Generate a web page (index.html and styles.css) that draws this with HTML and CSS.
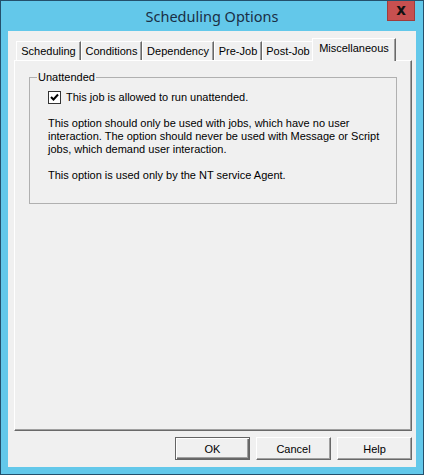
FILE: index.html
```html
<!DOCTYPE html>
<html>
<head>
  <title>Scheduling Options</title>
  <link rel="stylesheet" href="styles.css">
</head>
<body>
  <div class="window">
    <div class="titlebar">
      <span></span>
      <span class="title">Scheduling Options</span>
      <button class="close-button">x</button>
    </div>
    <div class="client">
      <div class="tabs">
        <div class="tab tab-scheduling">Scheduling</div>
        <div class="tab tab-conditions">Conditions</div>
        <div class="tab tab-dependency">Dependency</div>
        <div class="tab tab-prejob">Pre-Job</div>
        <div class="tab tab-postjob">Post-Job</div>
        <div class="tab tab-misc active">Miscellaneous</div>
      </div>
      <div class="panel">
        <fieldset class="group">
          <legend>Unattended</legend>
          <label class="check-row">
            <span class="checkbox">
              <svg width="9" height="9" viewBox="0 0 9 9"><path d="M1 4 L3.5 6.5 L8 1.5" fill="none" stroke="#000" stroke-width="2"/></svg>
            </span>
            This job is allowed to run unattended.
          </label>
          <p>This option should only be used with jobs, which have no user interaction. The option should never be used with Message or Script jobs, which demand user interaction.</p>
          <p>This option is used only by the NT service Agent.</p>
        </fieldset>
      </div>
      <div class="buttons">
        <button class="btn default">OK</button>
        <button class="btn">Cancel</button>
        <button class="btn">Help</button>
      </div>
    </div>
  </div>
</body>
</html>
```

FILE: styles.css
```css
body {
  margin: 0;
  font-family: "Liberation Sans", Arial, sans-serif;
  font-size: 11px;
  color: #000;
}
.window {
  width: 424px;
  height: 475px;
  box-sizing: border-box;
  border: 1px solid #24506c;
  background-color: #63c8ea;
  padding: 0 7px 7px 7px;
  display: flex;
  flex-direction: column;
}
.titlebar {
  height: 30px;
  display: grid;
  grid-template-columns: 1fr auto 1fr;
  align-items: start;
}
.title {
  font-family: "Noto Sans", "Open Sans", sans-serif;
  font-size: 14.5px;
  line-height: 30px;
  color: #1a2f45;
}
.close-button {
  justify-self: end;
  width: 28px;
  height: 20px;
  margin-right: 1px;
  padding: 0;
  border: 1px solid #a03c3c;
  border-top: none;
  background-color: #c75050;
  color: #111;
  font-family: "DejaVu Sans", sans-serif;
  font-weight: bold;
  font-size: 15px;
  line-height: 17px;
}
.client {
  flex: 1;
  background-color: #f0f0f0;
  padding: 7px 4px 7px 6px;
  display: flex;
  flex-direction: column;
}
.tabs {
  height: 22px;
  display: flex;
  align-items: flex-end;
  padding-left: 2px;
}
.tab {
  height: 19px;
  box-sizing: border-box;
  border-top: 1px solid #fff;
  border-left: 1px solid #fff;
  border-right: 1px solid #696969;
  box-shadow: inset -1px 0 0 #a0a0a0;
  text-align: center;
  line-height: 18px;
  white-space: nowrap;
}
.tab-scheduling { width: 65px; }
.tab-conditions { width: 61px; }
.tab-dependency { width: 72px; }
.tab-prejob { width: 48px; }
.tab-postjob { width: 52px; }
.tab-misc { width: 84px; }
.tab.active {
  height: 23px;
  margin: 0 0 -1px -2px;
  background-color: #f0f0f0;
  position: relative;
  z-index: 1;
  line-height: 19px;
}
.panel {
  flex: 1;
  border-top: 1px solid #fff;
  border-left: 1px solid #fff;
  border-right: 1px solid #696969;
  border-bottom: 1px solid #696969;
  box-shadow: inset -1px -1px 0 #a0a0a0;
  padding: 10px 14px 0 14px;
}
.group {
  margin: 0;
  border: 1px solid #b0b0b0;
  padding: 7px 6px 21px 18px;
}
.group legend {
  margin-left: -11px;
  padding: 0 1px;
  line-height: 13px;
}
.check-row {
  display: flex;
  align-items: center;
  gap: 5px;
  line-height: 13px;
}
.checkbox {
  width: 11px;
  height: 11px;
  border: 1px solid #333;
  background-color: #fff;
  display: flex;
  align-items: center;
  justify-content: center;
}
.group p {
  margin: 13px 0 0 0;
  line-height: 13px;
}
.buttons {
  margin-top: 6px;
  display: flex;
  justify-content: flex-end;
  gap: 6px;
}
.btn {
  width: 75px;
  height: 23px;
  padding: 0;
  font-family: "Liberation Sans", Arial, sans-serif;
  font-size: 11px;
  color: #000;
  background-color: #f0f0f0;
  border-top: 1px solid #fff;
  border-left: 1px solid #fff;
  border-right: 1px solid #696969;
  border-bottom: 1px solid #696969;
  box-shadow: inset -1px -1px 0 #a0a0a0;
}
.btn.default {
  border: 1px solid #646464;
  box-shadow: inset 1px 1px 0 #fff, inset -1px -1px 0 #696969, inset -2px -2px 0 #a0a0a0;
}
```
